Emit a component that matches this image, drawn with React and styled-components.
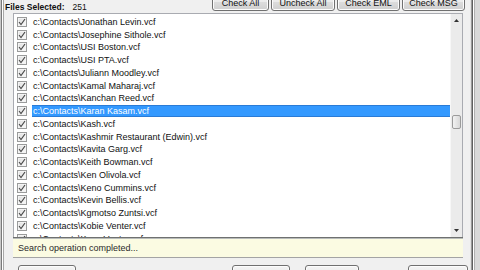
import React from "react";
import styled, { createGlobalStyle } from "styled-components";

const Global = createGlobalStyle`
  html, body { margin: 0; padding: 0; width: 480px; height: 270px; overflow: hidden; background: #f0f0f0; }
  body { font-family: "Liberation Sans", Arial, sans-serif; }
`;

const Window = styled.div`
  display: flex;
  width: 480px;
  height: 270px;
  overflow: hidden;
  background: #eeeeee;
`;

const FrameEdge = styled.div`
  flex: none;
  width: ${(p) => (p.$side === "left" ? 4 : 10)}px;
  background: ${(p) =>
    p.$side === "left"
      ? "linear-gradient(90deg, #c8c8c8 0 1px, #7a7a7a 1px 2px, #ffffff 2px 3px, #a8a8a8 3px 4px)"
      : "linear-gradient(90deg, #e4e4e4 0 1px, #9a9a9a 1px 2px, #5f5f5f 2px 3px, #ffffff 3px 4px, #b0b0b0 4px 5px, #d9d9d9 5px 10px)"};
`;

const Main = styled.div`
  flex: 1;
  min-width: 0;
  display: flex;
  flex-direction: column;
  background: #f0f0f0;
`;

const TopBar = styled.div`
  height: 13px;
  display: flex;
  align-items: flex-start;
  justify-content: space-between;
  padding: 0 5px 0 1px;
`;

const Label = styled.div`
  font-size: 8.5px;
  line-height: 13px;
  color: #111;
  padding-top: 1px;
  b { font-weight: bold; margin-right: 8px; }
`;

const ButtonRow = styled.div`
  display: flex;
  gap: 2px;
  margin-top: ${(p) => p.$offset}px;
  padding-left: ${(p) => p.$pad || 0}px;
`;

const Button = styled.div`
  width: ${(p) => p.$w || 62}px;
  height: 19px;
  box-sizing: border-box;
  border: 1px solid #707070;
  border-radius: 3px;
  background: linear-gradient(#f4f4f4 0%, #ebebeb 50%, #dddddd 51%, #cfcfcf 100%);
  box-shadow: inset 0 0 0 1px #fcfcfc;
  display: flex;
  align-items: flex-end;
  justify-content: center;
  padding-bottom: 1px;
  font-size: 9px;
  line-height: 11px;
  color: #111;
  margin-left: ${(p) => p.$ml || 0}px;
`;

const ListBox = styled.div`
  margin: 0 7px 0 9px;
  height: 224px;
  box-sizing: border-box;
  border: 1px solid #a9abb1;
  border-bottom: none;
  background: #ffffff;
  display: flex;
  overflow: hidden;
`;

const Rows = styled.div`
  flex: 1;
  min-width: 0;
  padding-top: 1.6px;
  overflow: hidden;
`;

const Row = styled.div`
  height: 12.75px;
  display: flex;
  align-items: center;
  padding-left: 3px;
`;

const CheckBox = styled.span`
  flex: none;
  width: 10px;
  height: 10px;
  box-sizing: border-box;
  border: 1px solid #9a9b9b;
  background: linear-gradient(135deg, #dedede, #fbfbfb);
  box-shadow: inset 0 0 0 1px #f4f4f4;
  display: flex;
  align-items: center;
  justify-content: center;
  margin-right: 5px;
`;

const Name = styled.span`
  flex: 1;
  height: 12px;
  display: flex;
  align-items: center;
  padding-left: 1px;
  font-size: 9px;
  white-space: nowrap;
  color: ${(p) => (p.$selected ? "#ffffff" : "#111111")};
  background: ${(p) => (p.$selected ? "#3399ff" : "transparent")};
  box-shadow: ${(p) => (p.$selected ? "inset 0 1px 0 #2a7bd6, inset 0 -1px 0 #2a7bd6" : "none")};
`;

const ScrollBar = styled.div`
  flex: none;
  width: 11px;
  display: flex;
  flex-direction: column;
  background: #ebebeb;
  border-left: 1px solid #f7f7f7;
`;

const Arrow = styled.div`
  height: 13px;
  display: flex;
  align-items: center;
  justify-content: center;
`;

const Track = styled.div`
  flex: 1;
  display: flex;
  flex-direction: column;
  padding-top: ${(p) => p.$thumbTop}px;
`;

const Thumb = styled.div`
  height: 12px;
  margin: 0 1px;
  border: 1px solid #9b9b9b;
  border-radius: 2px;
  background: linear-gradient(90deg, #f2f2f2, #d8d8d8);
`;

const StatusBar = styled.div`
  margin: 0 7px 0 9px;
  height: 21px;
  box-sizing: border-box;
  border-top: 1px solid #6f7170;
  box-shadow: inset 0 1px 0 #b9bcbb;
  border-bottom: 1px solid #a4a4a4;
  background: #fbfbe2;
  display: flex;
  align-items: center;
  padding: 1px 0 0 5px;
  font-size: 9px;
  color: #2a2a2a;
`;

const BottomBar = styled.div`
  flex: 1;
  overflow: hidden;
  padding-top: 7px;
`;

const Check = () => (
  <svg width="8" height="8" viewBox="0 0 8 8">
    <path d="M1 4 L3 6.5 L7 1" fill="none" stroke="#4a4a4a" strokeWidth="1.2" />
  </svg>
);

const names = [
  "Jonathan Levin.vcf",
  "Josephine Sithole.vcf",
  "USI Boston.vcf",
  "USI PTA.vcf",
  "Juliann Moodley.vcf",
  "Kamal Maharaj.vcf",
  "Kanchan Reed.vcf",
  "Karan Kasam.vcf",
  "Kash.vcf",
  "Kashmir Restaurant (Edwin).vcf",
  "Kavita Garg.vcf",
  "Keith Bowman.vcf",
  "Ken Olivola.vcf",
  "Keno Cummins.vcf",
  "Kevin Bellis.vcf",
  "Kgmotso Zuntsi.vcf",
  "Kobie Venter.vcf",
  "Koos Venter.vcf",
];

export default function App() {
  return (
    <>
      <Global />
      <Window>
        <FrameEdge $side="left" />
        <Main>
          <TopBar>
            <Label>
              <b>Files Selected:</b>251
            </Label>
            <ButtonRow $offset={-8}>
              <Button $w={57}>Check All</Button>
              <Button $w={64}>Uncheck All</Button>
              <Button $w={63}>Check EML</Button>
              <Button $w={63}>Check MSG</Button>
            </ButtonRow>
          </TopBar>
          <ListBox>
            <Rows>
              {names.map((n, i) => (
                <Row key={n}>
                  <CheckBox>
                    <Check />
                  </CheckBox>
                  <Name $selected={i === 7}>c:\Contacts\{n}</Name>
                </Row>
              ))}
            </Rows>
            <ScrollBar>
              <Arrow>
                <svg width="5" height="3" viewBox="0 0 5 3">
                  <path d="M0 3 L2.5 0 L5 3Z" fill="#333" />
                </svg>
              </Arrow>
              <Track $thumbTop={88}>
                <Thumb />
              </Track>
              <Arrow>
                <svg width="5" height="3" viewBox="0 0 5 3">
                  <path d="M0 0 L2.5 3 L5 0Z" fill="#333" />
                </svg>
              </Arrow>
            </ScrollBar>
          </ListBox>
          <StatusBar>Search operation completed...</StatusBar>
          <BottomBar>
            <ButtonRow $offset={0} $pad={14}>
              <Button $w={58} />
              <Button $w={58} $ml={154} />
              <Button $w={54} $ml={13} />
              <Button $w={60} $ml={47} />
            </ButtonRow>
          </BottomBar>
        </Main>
        <FrameEdge $side="right" />
      </Window>
    </>
  );
}
